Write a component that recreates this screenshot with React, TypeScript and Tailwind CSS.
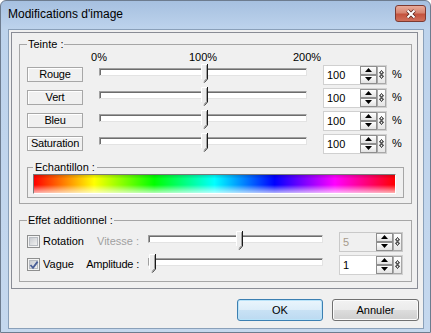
import React from 'react';

function Tri({ up }: { up?: boolean }) {
  return (
    <svg width="7" height="4" viewBox="0 0 7 4">
      <path d={up ? 'M3.5 0L7 4H0Z' : 'M0 0H7L3.5 4Z'} fill="#000" />
    </svg>
  );
}

function Spin({ value, disabled }: { value: string; disabled?: boolean }) {
  return (
    <div
      className={`flex h-[20px] w-[64px] border ${
        disabled ? 'border-[#c9c9c9] bg-[#f0f0f0]' : 'border-[#d0d0d0] bg-white'
      }`}
    >
      <span className={`flex-1 pl-[3px] leading-[18px] ${disabled ? 'text-[#a69a8b]' : 'text-black'}`}>
        {value}
      </span>
      <div className="flex w-[17px] flex-col">
        <div className="flex h-[9px] items-center justify-center border border-[#8e8e8e] bg-[linear-gradient(#ffffff,#e2e2e2)]">
          <Tri up />
        </div>
        <div className="flex h-[9px] items-center justify-center border border-[#8e8e8e] bg-[linear-gradient(#ffffff,#e2e2e2)]">
          <Tri />
        </div>
      </div>
      <div className="flex w-[9px] items-center justify-center border border-[#a8a8a8] bg-[linear-gradient(#ffffff,#e6e6e6)]">
        <svg width="5" height="9" viewBox="0 0 5 9">
          <path d="M2.5 0.5L4.5 3H3V6H4.5L2.5 8.5L0.5 6H2V3H0.5Z" fill="none" stroke="#000" strokeWidth="0.8" />
        </svg>
      </div>
    </div>
  );
}

function Slider({ className, pct, track }: { className: string; pct: number; track: number }) {
  return (
    <div className={`relative mt-[1px] h-[19px] self-start ${className}`}>
      <div className="mx-[4px] mt-[4px] h-[8px] border border-[#a0a0a0] border-b-[#e3e3e3] border-r-[#e3e3e3] bg-white shadow-[inset_1px_1px_0_#6d6d6d]" />
      <svg
        className="absolute top-0"
        style={{ left: `${5 + pct * (track - 7)}px` }}
        width="7"
        height="19"
        viewBox="0 0 7 19"
      >
        <path d="M0.5 0.5H6.5V15L3.5 18.5L0.5 15Z" fill="#ececec" />
        <path d="M0.5 15V0.5H6" fill="none" stroke="#fff" />
        <path d="M6.5 0V15L3.2 18.6" fill="none" stroke="#1a1a1a" />
        <path d="M5.5 1.2V14.6L3 17.3" fill="none" stroke="#a0a0a0" />
      </svg>
    </div>
  );
}

function Check({ checked }: { checked?: boolean }) {
  return (
    <div className="relative h-[13px] w-[13px] border border-[#8e8f8f] bg-[#f4f4f4] p-[1px]">
      <div className="h-full w-full border border-[#b8bcc2] bg-[linear-gradient(135deg,#c9ccd1,#f0f0f0)]" />
      {checked && (
        <svg className="absolute left-[1px] top-[1px]" width="10" height="10" viewBox="0 0 10 10">
          <path d="M1.5 5L4 7.8L8.6 1.6" fill="none" stroke="#4a5f97" strokeWidth="1.8" />
        </svg>
      )}
    </div>
  );
}

function TeinteRow({ label }: { label: string }) {
  return (
    <div className="flex h-[23px] items-center">
      <div className="flex h-[15px] w-[56px] items-center justify-center whitespace-nowrap border border-[#a7a7a7] leading-[13px] tracking-[-0.2px] shadow-[inset_1px_1px_0_#fff]">
        {label}
      </div>
      <Slider className="ml-[12px] w-[216px]" pct={0.5} track={208} />
      <div className="ml-[12px]">
        <Spin value="100" />
      </div>
      <span className="ml-[5px]">%</span>
    </div>
  );
}

export default function App() {
  return (
    <div className="h-[333px] w-[431px] font-['Liberation_Sans',Arial,sans-serif] text-[11px] text-black">
      <div className="flex h-full w-full flex-col rounded-t-[6px] border border-[#6d7c8f] bg-[linear-gradient(to_bottom,#a6c0e0,#bdd3ec_28px,#c5d8ee)]">
        <div className="flex h-[28px] items-start justify-between pl-[7px] pr-[4px]">
          <span className="mt-[5px] text-[12px] leading-[16px]">Modifications d'image</span>
          <div className="mt-[4px] flex h-[17px] w-[31px] items-center justify-center rounded-[3px] border border-[#7d3a31] bg-[linear-gradient(to_bottom,#e9ac9b,#d78571_45%,#c4533e_55%,#d0705b)]">
            <svg width="12" height="10" viewBox="0 0 12 10">
              <path d="M2.5 1.5L9.5 8.5M9.5 1.5L2.5 8.5" stroke="#5b241c" strokeWidth="3.6" />
              <path d="M2.5 1.5L9.5 8.5M9.5 1.5L2.5 8.5" stroke="#fff" strokeWidth="2" />
            </svg>
          </div>
        </div>

        <div className="ml-[7px] h-[300px] w-[416px] border border-[#8aa0b9] bg-[#f0f0f0]">
          <div className="ml-[2px] mt-[2px] h-[257px] w-[407px] border border-[#898c95] pl-[7px] pt-[5px]">
            <fieldset className="w-[393px] border border-[#a6a6a6] px-[7px] pb-[5px]">
              <legend className="px-[1px] leading-[13px]">Teinte :</legend>
              <div className="ml-[58px] flex h-[12px] w-[236px] justify-between leading-[12px]">
                <span className="w-[28px] text-center">0%</span>
                <span className="w-[28px] text-center">100%</span>
                <span className="w-[28px] text-center">200%</span>
              </div>
              <TeinteRow label="Rouge" />
              <TeinteRow label="Vert" />
              <TeinteRow label="Bleu" />
              <TeinteRow label="Saturation" />
              <fieldset className="mt-[6px] w-[377px] border border-[#a6a6a6] px-[5px] pb-[3px]">
                <legend className="px-[2px] leading-[13px]">Echantillon :</legend>
                <div className="h-[20px] w-[363px] border border-[#7a7a7a] border-b-white border-r-white bg-[linear-gradient(to_bottom,rgba(0,0,0,0.15),transparent_20%,transparent_55%,rgba(255,255,255,0.7)),linear-gradient(to_right,#ff0000,#ffff00,#00ff00,#00ffff,#0000ff,#ff00ff,#ff0000)]" />
              </fieldset>
            </fieldset>

            <fieldset className="mt-[10px] w-[393px] border border-[#a6a6a6] px-[7px] pb-[5px] pt-[3px]">
              <legend className="px-[1px] leading-[13px]">Effet additionnel :</legend>
              <div className="flex h-[23px] items-center">
                <div className="flex w-[58px] items-center">
                  <Check />
                  <span className="ml-[3px]">Rotation</span>
                </div>
                <span className="w-[54px] whitespace-nowrap text-right text-[#a0a0a0]">Vitesse :</span>
                <Slider className="ml-[5px] w-[183px]" pct={0.52} track={175} />
                <div className="ml-[12px]">
                  <Spin value="5" disabled />
                </div>
              </div>
              <div className="flex h-[23px] items-center">
                <div className="flex w-[58px] items-center">
                  <Check checked />
                  <span className="ml-[3px]">Vague</span>
                </div>
                <span className="w-[54px] whitespace-nowrap text-right tracking-[-0.2px]">Amplitude :</span>
                <Slider className="ml-[5px] w-[183px]" pct={0} track={175} />
                <div className="ml-[12px]">
                  <Spin value="1" />
                </div>
              </div>
            </fieldset>
          </div>

          <div className="mt-[10px] flex justify-end gap-[9px] pr-[4px]">
            <button className="h-[22px] w-[86px] rounded-[3px] border border-[#3c7fb1] bg-[linear-gradient(to_bottom,#eaf5fc,#dcedf9_50%,#c9e2f5_50%,#bcdaf1)] shadow-[inset_0_0_0_1px_#b9e3f9]">
              OK
            </button>
            <button className="h-[22px] w-[87px] rounded-[3px] border border-[#707070] bg-[linear-gradient(to_bottom,#f2f2f2,#ebebeb_50%,#dddddd_50%,#cfcfcf)] shadow-[inset_0_0_0_1px_#fcfcfc]">
              Annuler
            </button>
          </div>
        </div>
      </div>
    </div>
  );
}
